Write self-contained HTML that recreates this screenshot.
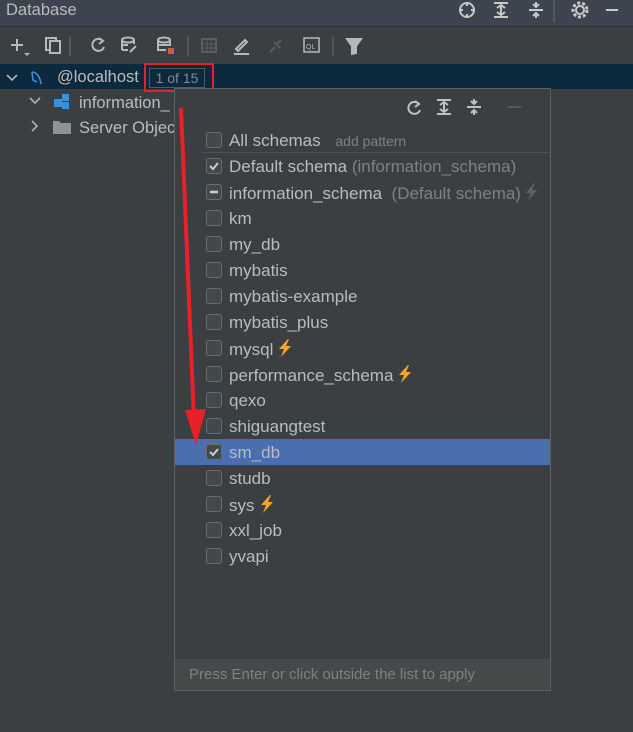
<!DOCTYPE html>
<html><head><style>
body{margin:0;width:633px;height:732px;background:#3c3f41;font-family:"Liberation Sans",sans-serif;overflow:hidden;position:relative;color:#bbbbbb}
.a{position:absolute}
.hdr{left:0;top:0;width:633px;height:26px;background:#3d4450}
.tb{left:0;top:26px;width:633px;height:37px;background:#3c3f41;border-top:1px solid #2b2d2f}
.sel{left:0;top:64px;width:633px;height:25px;background:#0d293e}
.t{font-size:16.5px;color:#bbbbbb;white-space:nowrap}
.pop{left:174px;top:88px;width:375px;height:601px;background:#3c3f41;border:1px solid #5e6163}
.foot{left:0;bottom:0;width:375px;height:31px;background:#45494a;font-size:15px;color:#808080;line-height:31px;padding-left:14px;box-sizing:border-box}
.cb{position:absolute;left:31px;width:14px;height:14px;border:1px solid #6b6b6b;border-radius:3px;background:#43494a}
.row{position:absolute;left:0;width:375px;height:26px}
.lbl{position:absolute;left:54px;top:4px;font-size:17px;color:#bbbbbb;white-space:nowrap}
.g{color:#808080}
.b{display:inline-block;vertical-align:-2px;margin-left:4px}
</style></head><body>
<div class="a hdr"></div>
<div class="a t" style="left:6px;top:1px;color:#bbbbbb">Database</div>
<svg class="a" style="left:456px;top:0" width="177" height="22" fill="none" stroke="#c8c8c8" stroke-width="2">
<circle cx="11" cy="10" r="7"/><path d="M11 2v4M11 14v4M3 10h4M15 10h4"/>
<path d="M38 3h14M38 17h14M45 5v10M41 8l4-3 4 3M41 12l4 3 4-3"/>
<path d="M73 10h14M80 2v5M77 4l3 3 3-3M80 18v-5M77 16l3-3 3 3"/>
<path d="M98 0v22" stroke="#555"/>
<circle cx="124" cy="10" r="4"/><circle cx="124" cy="10" r="7" stroke-dasharray="3 2" stroke-width="3"/>
<path d="M150 10h12"/></svg>
<div class="a tb"></div>
<svg class="a" style="left:8px;top:34px" width="370" height="24" fill="none" stroke="#b8b8b8" stroke-width="2">
<path d="M9 5v12M3 11h12"/><path d="M16 19l3 3 3-3" fill="#b8b8b8" stroke="none"/>
<rect x="38" y="4" width="10" height="12"/><rect x="42" y="7" width="10" height="12" fill="#3c3f41"/>
<path d="M62 2v20" stroke="#555"/>
<path d="M95 7a6 6 0 1 0 1 6M91 4l4 3-4 3"/>
<ellipse cx="120" cy="6" rx="6" ry="2.5"/><path d="M114 6v10M126 6v4M114 11h6M114 16h6M122 18l6-6"/>
<ellipse cx="156" cy="6" rx="6" ry="2.5"/><path d="M150 6v11M162 6v6M150 11h12M150 16h8"/><rect x="160" y="14" width="6" height="6" fill="#d9534f" stroke="none"/>
<path d="M180 2v20" stroke="#555"/>
<rect x="194" y="5" width="14" height="13" stroke="#5d5d5d"/><path d="M194 10h14M194 14h14M199 5v13M203 5v13" stroke="#5d5d5d" stroke-width="1"/>
<path d="M228 15l9-9 2 2-9 9zM226 20h15"/>
<path d="M262 18l5-5M273 6l-5 5M266 8l6 6" stroke="#5d5d5d"/>
<rect x="296" y="4" width="15" height="14" stroke-width="1.5"/><text x="298" y="15" font-size="7" fill="#b8b8b8" stroke="none" font-family="Liberation Sans">QL</text>
<path d="M325 2v20" stroke="#555"/>
<path d="M339 5h14l-5 7v7l-4 1v-8z" fill="#b8b8b8"/></svg>
<div class="a sel"></div>
<svg class="a" style="left:5px;top:70px" width="45" height="16" fill="none" stroke="#b0b0b0" stroke-width="1.6"><path d="M2 5l5 5 5-5"/><path d="M27 2c4 0 8 4 9 12M27 2l1 8 4 2" stroke="#3d8fd6"/></svg>
<div class="a t" style="left:57px;top:68px">@localhost</div>
<div class="a" style="left:149px;top:68px;width:54px;height:18px;border:1px solid #4b5a68;font-size:14px;color:#7f8a95;line-height:18px;text-align:center">1 of 15</div>
<div class="a" style="left:144px;top:63px;width:66px;height:25px;border:2px solid #e8202a"></div>
<svg class="a" style="left:28px;top:93px" width="50" height="42" fill="none" stroke="#b0b0b0" stroke-width="1.6"><path d="M2 5l5 5 5-5M4 28l5 5-5 5"/><rect x="26" y="6" width="8" height="8" fill="#3d8fd6" stroke="none"/><rect x="34" y="1" width="7" height="7" fill="#3d8fd6" stroke="none"/><rect x="34" y="9" width="7" height="7" fill="#3d8fd6" stroke="none"/><path d="M25 28h6l2 2h10v11H25z" fill="#8d9499" stroke="none"/></svg>
<div class="a t" style="left:79px;top:94px">information_</div>
<div class="a t" style="left:79px;top:119px">Server Objec</div>
<div class="a pop">
<svg class="a" style="left:228px;top:8px" width="120" height="22" fill="none" stroke="#c0c0c0" stroke-width="2">
<path d="M16 7a6 6 0 1 0 1 6M12 4l4 3-4 3"/>
<path d="M34 3h14M34 17h14M41 5v10M37 8l4-3 4 3M37 12l4 3 4-3"/>
<path d="M64 10h14M71 2v5M68 4l3 3 3-3M71 18v-5M68 16l3-3 3 3"/>
<path d="M105 10h13" stroke="#5a5a5a"/></svg>
<div class="a" style="left:27px;top:63px;width:348px;height:1px;background:#4e5254"></div>
<div class="row" style="top:38px"><div class="cb" style="top:5px"></div><div class="lbl">All schemas <span class="g" style="font-size:14px;margin-left:10px">add pattern</span></div></div>
<div class="row" style="top:64px"><div class="cb" style="top:5px"><svg width="14" height="14"><path d="M3 7l3 3 5-6" stroke="#ccc" stroke-width="2" fill="none"/></svg></div><div class="lbl">Default schema <span class="g">(information_schema)</span></div></div>
<div class="row" style="top:90px"><div class="cb" style="top:5px"><svg width="14" height="14"><path d="M3 7h8" stroke="#ccc" stroke-width="2.5"/></svg></div><div class="lbl">information_schema &nbsp;<span class="g">(Default schema)</span><svg class="b" width="14" height="18"><path d="M9 0L1 10h5l-3 8 9-11H7l3-7z" fill="#5f6264"/></svg></div></div>
<div class="row" style="top:116px"><div class="cb" style="top:5px"></div><div class="lbl">km</div></div>
<div class="row" style="top:142px"><div class="cb" style="top:5px"></div><div class="lbl">my_db</div></div>
<div class="row" style="top:168px"><div class="cb" style="top:5px"></div><div class="lbl">mybatis</div></div>
<div class="row" style="top:194px"><div class="cb" style="top:5px"></div><div class="lbl">mybatis-example</div></div>
<div class="row" style="top:220px"><div class="cb" style="top:5px"></div><div class="lbl">mybatis_plus</div></div>
<div class="row" style="top:246px"><div class="cb" style="top:5px"></div><div class="lbl">mysql<svg class="b" width="16" height="18"><path d="M11 0L2 10h5l-3 8 10-11H9l3-7z" fill="#f0a732"/></svg></div></div>
<div class="row" style="top:272px"><div class="cb" style="top:5px"></div><div class="lbl">performance_schema<svg class="b" width="16" height="18"><path d="M11 0L2 10h5l-3 8 10-11H9l3-7z" fill="#f0a732"/></svg></div></div>
<div class="row" style="top:298px"><div class="cb" style="top:5px"></div><div class="lbl">qexo</div></div>
<div class="row" style="top:324px"><div class="cb" style="top:5px"></div><div class="lbl">shiguangtest</div></div>
<div class="row" style="top:350px;background:#4b6eaf"><div class="cb" style="top:5px"><svg width="14" height="14"><path d="M3 7l3 3 5-6" stroke="#ccc" stroke-width="2" fill="none"/></svg></div><div class="lbl">sm_db</div></div>
<div class="row" style="top:376px"><div class="cb" style="top:5px"></div><div class="lbl">studb</div></div>
<div class="row" style="top:402px"><div class="cb" style="top:5px"></div><div class="lbl">sys<svg class="b" width="16" height="18"><path d="M11 0L2 10h5l-3 8 10-11H9l3-7z" fill="#f0a732"/></svg></div></div>
<div class="row" style="top:428px"><div class="cb" style="top:5px"></div><div class="lbl">xxl_job</div></div>
<div class="row" style="top:454px"><div class="cb" style="top:5px"></div><div class="lbl">yvapi</div></div>
<div class="a foot">Press Enter or click outside the list to apply</div>
</div>
<svg class="a" style="left:170px;top:100px" width="40" height="350"><path d="M11 8L24 320" stroke="#e8202a" stroke-width="4"/><path d="M15 310l11 35 10-36z" fill="#e8202a"/></svg>
</body></html>
